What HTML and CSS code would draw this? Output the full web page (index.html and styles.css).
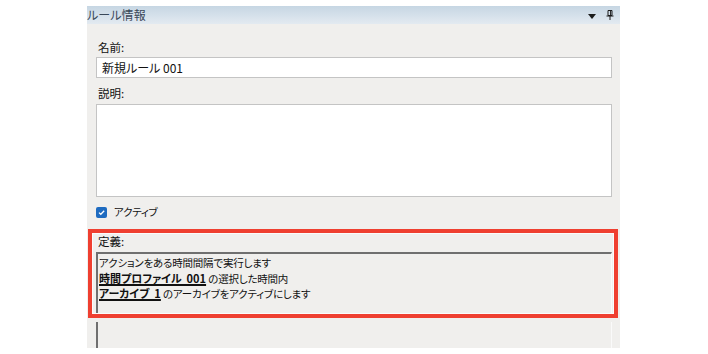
FILE: index.html
```html
<!DOCTYPE html>
<html lang="ja">
<head>
<meta charset="utf-8">
<link rel="stylesheet" href="styles.css">
</head>
<body>
<div class="panel">
  <div class="panel-header">
    <span class="panel-title">ルール情報</span>
    <div class="header-icons">
      <svg class="icon-drop" width="8" height="5" viewBox="0 0 8 5"><path d="M0 0H8L4 5Z" fill="#1b1b1b"/></svg>
      <svg class="icon-pin" width="8" height="10" viewBox="0 0 8 10"><path d="M2 0.5H6V5.5H2Z M4.6 0.5V5.5" fill="none" stroke="#1b1b1b" stroke-width="1"/><path d="M0.5 6H7.5" stroke="#1b1b1b" stroke-width="1"/><path d="M4 6V10" stroke="#1b1b1b" stroke-width="1"/></svg>
    </div>
  </div>
  <div class="panel-body">
    <div class="field-label">名前:</div>
    <div class="text-input">新規ルール 001</div>
    <div class="field-label label-desc">説明:</div>
    <div class="text-area"></div>
    <div class="check-row">
      <span class="checkbox"><svg width="11" height="11" viewBox="0 0 11 11"><path d="M3 5.6L4.8 7.3L8.2 3.8" fill="none" stroke="#fff" stroke-width="1.3"/></svg></span>
      <span class="check-label">アクティブ</span>
    </div>
    <div class="highlight">
      <div class="highlight-inner">
        <div class="field-label def-label">定義:</div>
        <div class="def-box">
          <div class="def-line">アクションをある時間間隔で実行します</div>
          <div class="def-line"><span class="def-link">時間プロファイル&nbsp; 001</span> の選択した時間内</div>
          <div class="def-line"><span class="def-link">アーカイブ&nbsp; 1</span> のアーカイブをアクティブにします</div>
        </div>
      </div>
    </div>
    <div class="next-box"></div>
  </div>
</div>
</body>
</html>
```
FILE: styles.css
```css
html, body {
  margin: 0;
  padding: 0;
  background: #ffffff;
}
body {
  font-family: "Noto Sans CJK JP", "Noto Sans", sans-serif;
  font-feature-settings: "palt";
  color: #111111;
  font-size: 12px;
}
.panel {
  margin: 6px 0 0 87px;
  width: 533px;
  height: 342px;
  background: #f0efed;
  display: flex;
  flex-direction: column;
}
.panel-header {
  height: 18px;
  background: linear-gradient(#c6d6e3, #e3eaf1);
  display: flex;
  align-items: center;
  justify-content: space-between;
  padding: 0 6px 0 0;
}
.panel-title {
  font-size: 12px;
  color: #3a4858;
  line-height: 18px;
  letter-spacing: 0.1px;
}
.header-icons {
  display: flex;
  align-items: center;
  gap: 10px;
}
.icon-drop { margin-top: 3px; }
.icon-pin { margin-bottom: 1px; }
.panel-body {
  padding: 0 8px 0 9px;
  display: flex;
  flex-direction: column;
  flex: 1;
}
.field-label {
  line-height: 14px;
  height: 14px;
  padding-left: 2px;
  margin-top: 16px;
  font-size: 11.5px;
}
.text-input {
  margin-top: 3px;
  height: 19px;
  border: 1px solid #c4c4c4;
  background: #ffffff;
  line-height: 19px;
  padding-left: 5px;
  font-size: 12px;
}
.label-desc { margin-top: 8px; }
.text-area {
  margin-top: 4px;
  height: 91px;
  border: 1px solid #c4c4c4;
  background: #ffffff;
}
.check-row {
  margin-top: 8px;
  display: flex;
  align-items: center;
  height: 14px;
  gap: 7px;
}
.checkbox {
  width: 11px;
  height: 11px;
  border-radius: 2px;
  background: #1e6bc0;
  display: flex;
}
.check-label {
  font-size: 10.5px;
  line-height: 14px;
  letter-spacing: -0.3px;
}
.highlight {
  margin: 10px -6px 0 -8px;
  border: 4px solid #ef3f30;
  height: 81px;
}
.highlight-inner {
  border: 1px solid #fbfbfb;
  height: 79px;
  padding: 0 1px 0 3px;
  display: flex;
  flex-direction: column;
}
.def-label { margin-top: 0; }
.def-box {
  margin-top: 4px;
  border-top: 2px solid #6f6f6f;
  border-left: 2px solid #6f6f6f;
  border-right: 1px solid #fafafa;
  flex: 1;
  padding: 1px 0 0 1px;
}
.def-line {
  line-height: 15.5px;
  height: 15.5px;
  font-size: 10.5px;
  letter-spacing: -0.2px;
  white-space: nowrap;
}
.def-link {
  font-size: 11px;
  font-weight: bold;
  letter-spacing: 0;
  text-decoration: underline;
  text-decoration-thickness: 1.5px;
  text-underline-offset: 1px;
}
.next-box {
  margin-top: 4px;
  flex: 1;
  border-left: 2px solid #6f6f6f;
  border-right: 1px solid #fafafa;
}
```
